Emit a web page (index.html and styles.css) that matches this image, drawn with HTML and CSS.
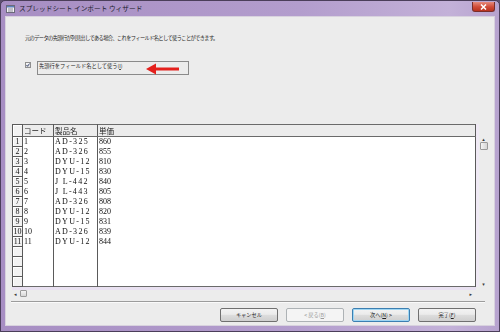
FILE: index.html
```html
<!DOCTYPE html>
<html>
<head>
    <meta charset="utf-8">
    <link rel="stylesheet" href="styles.css">
</head>
<body>
    <div class="window">
        <div class="titlebar">
            <svg class="app-icon" width="9" height="8" viewBox="0 0 9 8">
                <rect x="0.5" y="0.5" width="8" height="7" fill="#f4f4f4" stroke="#6b6b7a"/>
                <rect x="1" y="1" width="7" height="1.5" fill="#5b7fb8"/>
                <line x1="2" y1="4" x2="7" y2="4" stroke="#8a8a9a"/>
                <line x1="2" y1="6" x2="7" y2="6" stroke="#8a8a9a"/>
            </svg>
            <div class="title">スプレッドシート インポート ウィザード</div>
            <div class="close-button">
                <svg width="7" height="6" viewBox="0 0 7 6">
                    <path d="M1 0.5 L6 5.5 M6 0.5 L1 5.5" stroke="#fff" stroke-width="1.5"/>
                </svg>
            </div>
        </div>

        <div class="client">
            <div class="intro">元のデータの先頭行が列見出しである場合、これをフィールド名として使うことができます。</div>

            <div class="option">
                <div class="checkbox">
                    <svg width="4" height="4" viewBox="0 0 4 4">
                        <path d="M0.5 2 L1.5 3.3 L3.6 0.5" stroke="#2b3a6a" stroke-width="0.9" fill="none"/>
                    </svg>
                </div>
                <div class="option-box">
                    <span class="option-label">先頭行をフィールド名として使う(<u>I</u>)</span>
                    <svg class="red-arrow" width="34" height="12" viewBox="0 0 34 12">
                        <polygon points="0,6 10,0.5 10,11.5" fill="#e4201c"/>
                        <rect x="9" y="4.5" width="24" height="3" fill="#e4201c"/>
                    </svg>
                </div>
            </div>

            <div class="sheet-area">
                <div class="sheet-row">
                    <table class="sheet">
                        <colgroup>
                            <col class="col-num">
                            <col class="col-code">
                            <col class="col-name">
                            <col>
                        </colgroup>
                        <thead>
                            <tr>
                                <th class="num"></th>
                                <th>コード</th>
                                <th>製品名</th>
                                <th>単価</th>
                            </tr>
                        </thead>
                        <tbody>
                            <tr><td class="num">1</td><td>1</td><td class="name">AD-325</td><td>860</td></tr>
                            <tr><td class="num">2</td><td>2</td><td class="name">AD-326</td><td>855</td></tr>
                            <tr><td class="num">3</td><td>3</td><td class="name">DYU-12</td><td>810</td></tr>
                            <tr><td class="num">4</td><td>4</td><td class="name">DYU-15</td><td>830</td></tr>
                            <tr><td class="num">5</td><td>5</td><td class="name">J L-442</td><td>840</td></tr>
                            <tr><td class="num">6</td><td>6</td><td class="name">J L-443</td><td>805</td></tr>
                            <tr><td class="num">7</td><td>7</td><td class="name">AD-326</td><td>808</td></tr>
                            <tr><td class="num">8</td><td>8</td><td class="name">DYU-12</td><td>820</td></tr>
                            <tr><td class="num">9</td><td>9</td><td class="name">DYU-15</td><td>831</td></tr>
                            <tr><td class="num">10</td><td>10</td><td class="name">AD-326</td><td>839</td></tr>
                            <tr><td class="num">11</td><td>11</td><td class="name">DYU-12</td><td>844</td></tr>
                            <tr><td class="num"></td><td></td><td></td><td></td></tr>
                            <tr><td class="num"></td><td></td><td></td><td></td></tr>
                            <tr><td class="num"></td><td></td><td></td><td></td></tr>
                            <tr><td class="num"></td><td></td><td></td><td></td></tr>
                        </tbody>
                    </table>
                    <div class="vscroll">
                        <span class="arrow">▴</span>
                        <span class="thumb"></span>
                        <span class="spacer"></span>
                        <span class="arrow">▾</span>
                    </div>
                </div>
                <div class="hscroll">
                    <span class="arrow">◂</span>
                    <span class="thumb"></span>
                    <span class="spacer"></span>
                    <span class="arrow">▸</span>
                </div>
            </div>

            <div class="separator"></div>

            <div class="buttons">
                <button class="button">キャンセル</button>
                <button class="button disabled">&lt; 戻る(<u>B</u>)</button>
                <button class="button default">次へ(<u>N</u>) &gt;</button>
                <button class="button">完了(<u>F</u>)</button>
            </div>
        </div>
    </div>
</body>
</html>
```

FILE: styles.css
```css
body {
    margin: 0;
    width: 500px;
    height: 332px;
    background: #5d4f6e;
    font-family: 'Noto Sans CJK JP', 'DejaVu Sans', sans-serif;
    color: #1e1e1e;
    overflow: hidden;
}

.window {
    height: 332px;
    box-sizing: border-box;
    display: flex;
    flex-direction: column;
    background: linear-gradient(90deg, #a78ec3 0%, #b39dcd 60%, #c3b1d8 90%, #b7a3cf 100%);
    border: 1px solid #4b3e5a;
    border-radius: 5px 5px 0 0;
    padding: 0 4px 5px 4px;
}

.titlebar {
    height: 15px;
    flex: none;
    display: flex;
    align-items: flex-start;
}

.app-icon {
    margin-top: 4px;
    margin-left: 1px;
}

.title {
    margin-left: 4px;
    margin-top: 3px;
    font-size: 6.7px;
    line-height: 9px;
    color: #1a1a2a;
    flex: 1;
}

.close-button {
    width: 23px;
    height: 10px;
    margin-top: 1px;
    box-sizing: border-box;
    border: 1px solid #7a2d2a;
    border-top: none;
    border-radius: 0 0 3px 3px;
    background: linear-gradient(#e68a7c, #cf4a37 55%, #b8321f);
    display: flex;
    align-items: center;
    justify-content: center;
}

.client {
    flex: 1;
    min-height: 0;
    background: #ececec;
    display: flex;
    flex-direction: column;
    box-shadow: inset 0 0 0 1px #d8d2de;
}

.intro {
    margin: 18px 0 0 20px;
    height: 8px;
    font-size: 5.25px;
    line-height: 8px;
    letter-spacing: -0.64px;
    white-space: nowrap;
}

.option {
    display: flex;
    align-items: flex-start;
    margin: 19px 0 0 20px;
}

.checkbox {
    width: 6px;
    height: 6px;
    margin-top: 1px;
    box-sizing: border-box;
    border: 1px solid #8f8f8f;
    background: linear-gradient(#f8f8f8, #dcdcdc);
    display: flex;
    align-items: center;
    justify-content: center;
}

.option-box {
    width: 152px;
    height: 14px;
    margin-left: 6px;
    box-sizing: border-box;
    border: 1px solid #8a8a8a;
    display: flex;
    align-items: flex-start;
    padding: 1px 0 0 1px;
}

.option-label {
    font-size: 5.25px;
    line-height: 7px;
}

.red-arrow {
    margin-left: 23px;
}

.sheet-area {
    margin: 49px 0 0 7px;
}

.sheet-row {
    display: flex;
}

.sheet {
    width: 464px;
    table-layout: fixed;
    border-collapse: collapse;
    background: #fff;
    border: 1px solid #6a6a6a;
    filter: grayscale(1);
}

.col-num {
    width: 10px;
}

.col-code {
    width: 31px;
}

.col-name {
    width: 44px;
}

.sheet th {
    height: 11px;
    padding: 0 0 0 1px;
    background: #ececec;
    border-bottom: 1px solid #6a6a6a;
    border-right: 1px solid #5a5a5a;
    font-weight: normal;
    font-size: 7.5px;
    line-height: 11px;
    text-align: left;
    overflow: hidden;
    white-space: nowrap;
}

.sheet td {
    height: 9px;
    padding: 0 0 0 1px;
    border-right: 1px solid #5a5a5a;
    font-family: 'Liberation Serif', 'DejaVu Serif', serif;
    font-size: 8px;
    line-height: 9px;
    color: #111;
    white-space: nowrap;
    overflow: hidden;
}

.sheet td.name {
    letter-spacing: 1.3px;
}

.sheet .num {
    padding: 0;
    text-align: center;
    background: #f2f2f2;
    border: 1px solid #5a5a5a;
    box-shadow: inset 1px 1px 0 #fff;
}

.vscroll {
    width: 12px;
    display: flex;
    flex-direction: column;
    align-items: center;
    padding-top: 12px;
    box-sizing: border-box;
    border-left: 3px solid #efe9f4;
}

.arrow {
    font-size: 5px;
    line-height: 6px;
    color: #3a3a3a;
}

.vscroll .thumb {
    width: 8px;
    height: 8px;
    box-sizing: border-box;
    border: 1px solid #9a9a9a;
    border-radius: 1px;
    background: linear-gradient(90deg, #f4f4f4, #d6d6d6);
}

.spacer {
    flex: 1;
}

.hscroll {
    width: 464px;
    height: 10px;
    display: flex;
    align-items: center;
    box-sizing: border-box;
    border-top: 3px solid #e9e1f1;
    padding: 0 4px 0 2px;
}

.hscroll .thumb {
    width: 7px;
    height: 7px;
    margin-left: 3px;
    box-sizing: border-box;
    border: 1px solid #9a9a9a;
    border-radius: 1px;
    background: linear-gradient(#f4f4f4, #d6d6d6);
}

.separator {
    margin: 4px 0 0 6px;
    width: 474px;
    height: 1px;
    flex: none;
    background: #9c9c9c;
    border-bottom: 1px solid #fafafa;
}

.buttons {
    display: flex;
    justify-content: flex-end;
    gap: 8px;
    margin-top: 5px;
    padding-right: 19px;
}

.button {
    width: 58px;
    height: 14px;
    padding: 0;
    box-sizing: border-box;
    border: 1px solid #707070;
    border-radius: 2px;
    background: linear-gradient(#f3f3f3 0%, #ebebeb 45%, #dddddd 50%, #cfcfcf 100%);
    font-family: 'Noto Sans CJK JP', 'DejaVu Sans', sans-serif;
    font-size: 5.25px;
    line-height: 12px;
    color: #1e1e1e;
}

.button.disabled {
    border-color: #adb2b5;
    background: #f4f4f4;
    color: #9a9a9a;
}

.button.default {
    border-color: #3c7fb1;
    box-shadow: inset 0 0 0 1px #9fd6f3;
}
```
